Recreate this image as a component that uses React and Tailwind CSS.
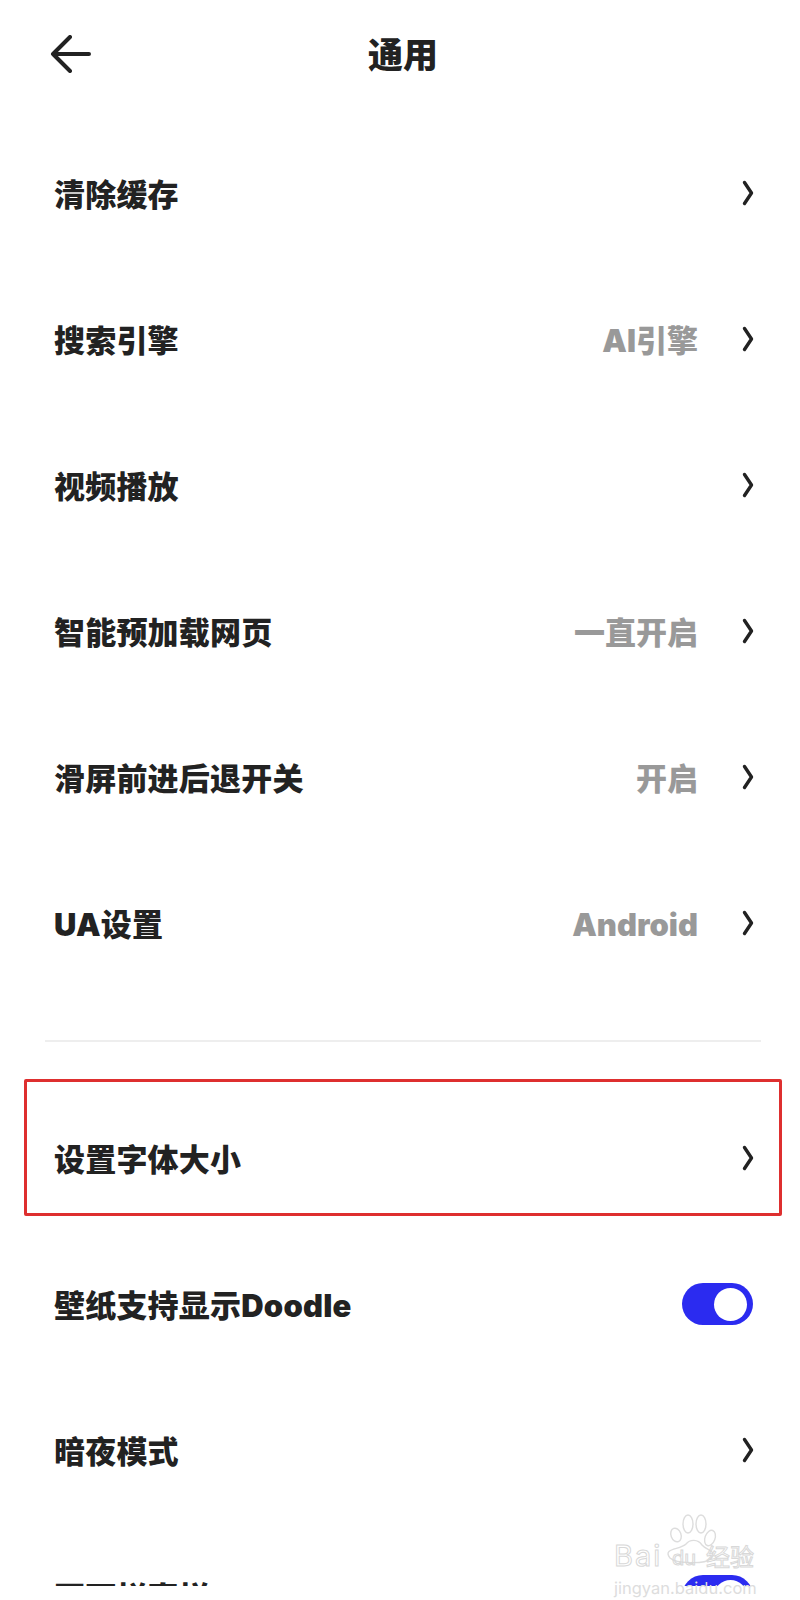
const rows = [
    { label: '清除缓存' },
    { label: '搜索引擎', value: 'AI引擎' },
    { label: '视频播放' },
    { label: '智能预加载网页', value: '一直开启' },
    { label: '滑屏前进后退开关', value: '开启' },
    { label: 'UA设置', value: 'Android' },
];

function Chevron() {
    return (
        <svg width="12" height="26" viewBox="0 0 12 26" fill="none" className="mb-[5px] shrink-0">
            <path d="M2.5 2.5 L9.5 13 L2.5 23.5" stroke="#222" strokeWidth="3.4" strokeLinecap="round" strokeLinejoin="round" />
        </svg>
    );
}

function Row({ label, value }) {
    return (
        <div className="flex h-[146px] items-center pl-[54px] pr-[46px]">
            <span className="flex-1 text-[31px] tracking-[0.2px] font-black text-[#222]">{label}</span>
            {value && <span className="mr-[44px] text-[31px] font-black text-[#999]">{value}</span>}
            <Chevron />
        </div>
    );
}

function Toggle() {
    return (
        <div className="mb-[4px] flex h-[42px] w-[71px] items-center justify-end rounded-full bg-[#2b2bf0] pr-[6px]">
            <div className="h-[33px] w-[33px] rounded-full bg-white" />
        </div>
    );
}

export default function App() {
    return (
        <div className="relative h-[1600px] w-[800px] overflow-hidden bg-white font-['Inter','Noto_Sans_CJK_SC',sans-serif]">
            <div className="h-[1586px] overflow-hidden">
                {/* Header */}
                <div className="relative flex h-[122px] items-start justify-center pl-[6px] pt-[32px]">
                    <svg width="42" height="38" viewBox="0 0 42 38" fill="none" className="absolute left-[50px] top-[35px]">
                        <path d="M39 19 H3 M20 2 L3 19 L20 36" stroke="#222" strokeWidth="4" strokeLinecap="round" strokeLinejoin="round" />
                    </svg>
                    <span className="text-[35px] leading-[46px] font-black text-[#222]">通用</span>
                </div>

                {rows.map((row) => (
                    <Row key={row.label} label={row.label} value={row.value} />
                ))}

                <div className="ml-[45px] mr-[39px] mt-[42px] h-[2px] bg-[#eeeeee]" />

                {/* Highlighted row */}
                <div className="relative mt-[45px]">
                    <Row label="设置字体大小" />
                    <div className="absolute left-[24px] right-[18px] top-[-8px] h-[137px] rounded-[2px] border-[3px] border-[#de2f2f]" />
                </div>

                <div className="flex h-[146px] items-center justify-between pl-[54px] pr-[47px]">
                    <span className="text-[31px] tracking-[0.2px] font-black text-[#222]">壁纸支持显示Doodle</span>
                    <Toggle />
                </div>

                <Row label="暗夜模式" />

                <div className="flex h-[146px] items-center justify-between pl-[54px] pr-[47px]">
                    <span className="text-[31px] tracking-[0.2px] font-black text-[#222]">页面栏直样</span>
                    <Toggle />
                </div>
            </div>

            {/* Watermark */}
            <div className="absolute left-[614px] top-[1514px] w-[146px] text-[#dddddd]">
                <svg width="146" height="50" viewBox="0 0 146 50" fill="none" stroke="#dddddd" strokeWidth="1.4" className="absolute left-0 top-0">
                    <ellipse cx="62" cy="21" rx="5" ry="7" transform="rotate(-20 62 21)" />
                    <ellipse cx="74" cy="10" rx="5" ry="9" />
                    <ellipse cx="87" cy="10" rx="5" ry="9" />
                    <ellipse cx="96" cy="24" rx="5" ry="8" transform="rotate(20 96 24)" />
                    <path d="M56 44 C48 34 66 36 72 30 C76 25 84 25 88 31 C93 37 104 36 96 45 C92 50 62 50 56 44 Z" />
                </svg>
                <div className="relative flex h-[68px] items-end leading-none">
                    <span className="w-[58px] pb-[12px] text-[29px] tracking-[2px] text-transparent [-webkit-text-stroke:1px_#d8d8d8]">Bai</span>
                    <span className="w-[34px] pb-[14px] text-[20px] text-transparent [-webkit-text-stroke:1px_#d8d8d8]">du</span>
                    <span className="pb-[12px] text-[24px] whitespace-nowrap text-transparent [-webkit-text-stroke:1px_#d8d8d8]">经验</span>
                </div>
                <div className="relative -mt-[4px] text-[16.5px] leading-[20px] whitespace-nowrap">jingyan.baidu.com</div>
            </div>
        </div>
    );
}
